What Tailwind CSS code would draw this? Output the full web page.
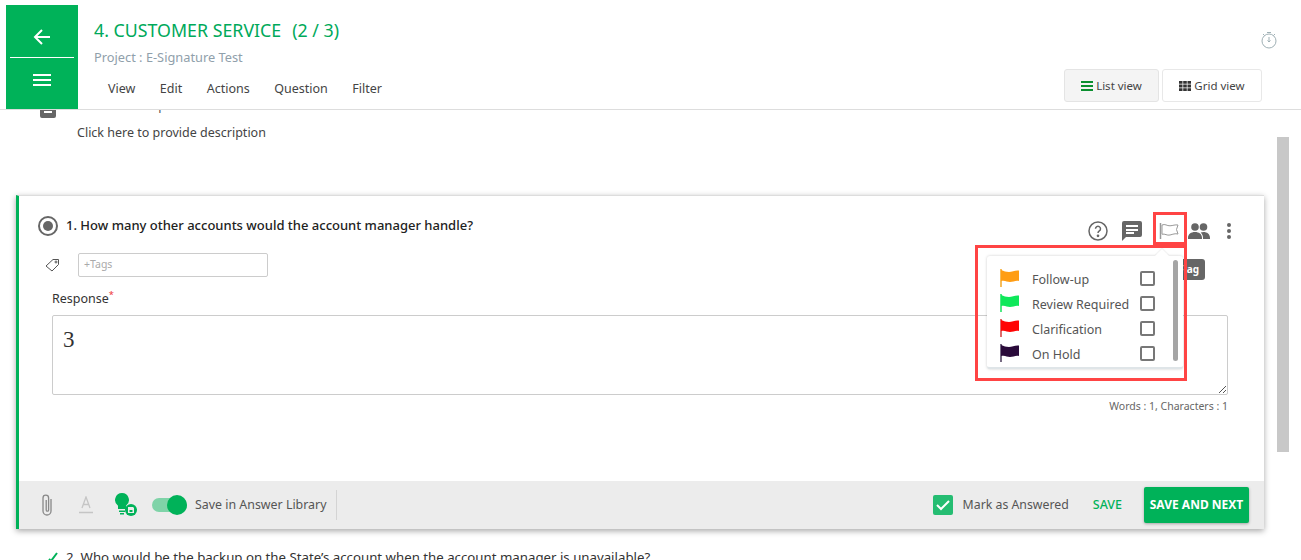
<!DOCTYPE html>
<html lang="en">
<head>
  <meta charset="UTF-8">
  <title>Customer Service</title>
  <script src="https://cdn.jsdelivr.net/npm/@tailwindcss/browser@4"></script>
</head>
<body class="h-[560px] overflow-hidden bg-white font-['Noto_Sans',sans-serif] text-[12.5px] text-[#444]">
  <!-- header -->
  <header class="relative z-20 flex h-[110px] border-b border-[#ddd] bg-white pl-[6px] pr-[39px]">
    <div class="mt-[5px] flex h-[104px] w-[72px] flex-col items-center bg-[#00b259] text-white">
      <svg class="mt-[22px] h-5 w-5" viewBox="0 0 20 20" fill="none" stroke="currentColor" stroke-width="2"><path d="M18 10H3M10 3l-7 7 7 7"/></svg>
      <div class="mt-[10px] h-px w-[64px] bg-white"></div>
      <svg class="mt-[15px] h-[14px] w-5" viewBox="0 0 20 14" fill="currentColor"><path d="M1 1h18v2H1zM1 6h18v2H1zM1 11h18v2H1z"/></svg>
    </div>
    <div class="ml-4 flex-1">
      <h1 class="mt-[18px] flex h-6 items-center text-[17.800px] leading-6 text-[#00a95a]"><span>4. CUSTOMER SERVICE</span><span class="ml-[11px]">(2 / 3)</span></h1>
      <p class="mt-[6px] text-[12.800px] leading-[18px] text-[#90a0ab]">Project : E-Signature Test</p>
      <nav class="mt-[14px] ml-[14px] flex gap-[24.500px] leading-[18px] text-[#444]">
        <span>View</span><span>Edit</span><span>Actions</span><span>Question</span><span>Filter</span>
      </nav>
    </div>
    <div class="flex flex-col items-end">
      <svg class="mt-[31px] mr-[-16px] h-[18px] w-[18px] text-[#9fb0b5]" viewBox="0 0 18 18" fill="none" stroke="currentColor" stroke-width="1"><circle cx="9" cy="10" r="7"/><path d="M9 6v5M7.500 9.500 9 11l1.500-1.500M7 1.500h4M3 3l1.500 1.500M15 3l-1.500 1.500"/></svg>
      <div class="mt-[20px] flex gap-[3px] text-[11.500px] leading-none">
        <button class="flex h-[33px] w-[95px] items-center justify-center gap-[3px] rounded-[3px] border border-[#e4e4e4] bg-[#f4f4f4]">
          <svg class="h-[10px] w-3 text-[#0a8f2f]" viewBox="0 0 12 10" fill="currentColor"><path d="M0 0h12v2H0zM0 4h12v2H0zM0 8h12v2H0z"/></svg>List view
        </button>
        <button class="flex h-[33px] w-[100px] items-center justify-center gap-[3px] rounded-[3px] border border-[#e8e8e8] bg-white">
          <svg class="h-[10px] w-3 text-[#333]" viewBox="0 0 12 10" fill="currentColor"><path d="M0 0h3.500v2.800H0zM4.200 0h3.600v2.800H4.200zM8.500 0H12v2.800H8.500zM0 3.600h3.500v2.800H0zM4.200 3.600h3.600v2.800H4.200zM8.500 3.600H12v2.800H8.500zM0 7.200h3.500V10H0zM4.200 7.200h3.600V10H4.200zM8.500 7.200H12V10H8.500z"/></svg>Grid view
        </button>
      </div>
    </div>
  </header>

  <!-- scrollbar -->
  <div class="absolute top-[137px] left-[1277px] h-[315px] w-3 bg-[#c8c8c8]"></div>

  <main class="relative">
    <!-- section description, clipped under the header -->
    <div class="relative z-10 mt-[-13px] flex h-[37px] pl-[40px]">
      <svg class="mt-[7px] h-[14px] w-4 shrink-0 text-[#666]" viewBox="0 0 16 14" fill="currentColor"><path d="M0 0h16v12a2 2 0 0 1-2 2H2a2 2 0 0 1-2-2zM4 7v2h8V7z"/></svg>
      <div class="ml-[21px]">
        <p class="h-[18px] leading-[18px] text-[#555]">Section description</p>
        <p class="mt-[9px] leading-[18px] text-[#444]">Click here to provide description</p>
      </div>
    </div>

    <!-- question card -->
    <section class="relative mt-[61px] ml-[16px] h-[334px] w-[1248px] border-t border-[#ddd] border-l-[3px] border-l-[#00b259] bg-white shadow-[0_2px_6px_rgba(0,0,0,0.35)]">
      <div class="flex h-[57px] pl-[19px]">
        <span class="mt-[20px] flex h-5 w-5 items-center justify-center rounded-full border-2 border-[#666]"><span class="h-[10px] w-[10px] rounded-full bg-[#666]"></span></span>
        <h2 class="mt-[19px] ml-2 text-[13px] leading-5 font-medium text-[#222]">1. How many other accounts would the account manager handle?</h2>
        <div class="mt-[19px] mr-[33px] ml-auto flex h-8 items-start text-[#666]">
          <svg class="mt-[6px] h-5 w-5" viewBox="0 0 20 20" fill="none" stroke="currentColor" stroke-width="1.500"><circle cx="10" cy="10" r="9"/><path d="M7.500 7.800a2.500 2.500 0 1 1 3.800 2.100c-.9.6-1.300 1-1.300 2.100"/><circle cx="10" cy="14.800" r=".6" fill="currentColor"/></svg>
          <svg class="mt-[6px] ml-[14px] h-5 w-5" viewBox="0 0 20 20" fill="currentColor"><path fill-rule="evenodd" d="M2 0h16a2 2 0 0 1 2 2v12a2 2 0 0 1-2 2H4l-4 4V2a2 2 0 0 1 2-2zm2 4v2h12V4zm0 4v2h12V8zm0 4v1h8v-2H4z"/></svg>
          <svg class="mt-[7px] ml-[17px] h-[18px] w-5 text-[#999]" viewBox="0 0 20 18" fill="none" stroke="currentColor"><path d="M1.500 1v16" stroke-width="1.500"/><path d="M3 3c3-1.500 5 1 8 .8s5-1.300 8-.8l-1.500 4.500L19 12c-3-.7-5 .2-8 1s-5-1.500-8-.8z" fill="#fff"/></svg>
          <svg class="mt-[8px] ml-[9px] h-4 w-[22px]" viewBox="0 0 22 16" fill="currentColor"><circle cx="7" cy="4" r="3.800"/><circle cx="15.500" cy="4" r="3.800"/><path d="M0 15c0-4 3-6 7-6s7 2 7 6v1H0zM15 16v-1c0-2.200-.8-4-2.300-5.400 1-.4 2-.6 2.800-.6 3.500 0 6.500 2 6.500 6v1z"/></svg>
          <svg class="mt-[6px] ml-[17px] h-5 w-[4px]" viewBox="0 0 4 20" fill="currentColor"><circle cx="2" cy="4" r="2"/><circle cx="2" cy="10" r="2"/><circle cx="2" cy="16" r="2"/></svg>
        </div>
      </div>
      <div class="flex items-center pl-[26px]">
        <svg class="h-[14px] w-[15px] text-[#555]" viewBox="0 0 15 14" fill="none" stroke="currentColor"><path d="M1 8 8 1.500h5.500V6.500L7 13z"/><circle cx="11" cy="4" r="1"/></svg>
        <div class="ml-[18px] flex h-6 w-[190px] items-center rounded-[2px] border border-[#ccc] px-[5px] text-[10.500px] text-[#aaa]">+Tags</div>
      </div>
      <p class="mt-[13px] ml-[33px] leading-[18px] text-[#333]">Response<sup class="text-[#e33]">*</sup></p>
      <div class="relative mt-[7px] ml-[33px] h-[80px] w-[1176px] rounded-[2px] border border-[#ccc] px-[10px] py-[12px] font-['Liberation_Serif',serif] text-[23px] leading-6 text-[#333]">3
        <svg class="absolute right-0 bottom-0 h-[10px] w-[10px] text-[#555]" viewBox="0 0 10 10" stroke="currentColor"><path d="M9 2 2 9M9 6 6 9"/></svg>
      </div>
      <p class="mt-[4px] mr-[36px] text-right text-[10.500px] leading-[14px] text-[#666]">Words : 1, Characters : 1</p>

      <!-- footer -->
      <div class="absolute inset-x-0 bottom-0 flex h-[48px] items-center bg-[#ececec] pl-[20px]">
        <svg class="h-6 w-[16px] text-[#888]" viewBox="0 0 16 24" fill="none" stroke="currentColor" stroke-width="1.300"><path d="M12 6v12a4 4 0 0 1-8 0V5a2.800 2.800 0 0 1 5.600 0v12a1.200 1.200 0 0 1-2.400 0V7"/></svg>
        <svg class="ml-[24px] h-[18px] w-[14px] text-[#c5c5c5]" viewBox="0 0 14 18" fill="none" stroke="currentColor" stroke-width="1.300"><path d="M3 12 7 1l4 11M4.500 8.500h5"/><path d="M0 16.500h14" stroke-width="1.500"/></svg>
        <svg class="ml-[21px] h-[24px] w-[24px]" viewBox="0 0 24 24"><path fill="#00b259" d="M8 0a7 7 0 0 1 4 12.700V16H4v-3.300A7 7 0 0 1 8 0zM5 17.500h6V19H5zM6 20h4v1.500H6z"/><circle cx="17" cy="17" r="6" fill="#00b259"/><path fill="#ececec" d="M14 14h5l1 1v5h-6zm1.500 3v2h3v-2z"/></svg>
        <span class="relative ml-[14px] h-[14px] w-[35px] rounded-full bg-[#7fd3a8]"><span class="absolute top-[-3px] right-0 h-5 w-5 rounded-full bg-[#00b259]"></span></span>
        <span class="ml-2 text-[12.400px] text-[#555]">Save in Answer Library</span>
        <span class="ml-[10px] h-[30px] w-px bg-[#d4d4d4]"></span>
        <span class="ml-auto flex h-5 w-5 items-center justify-center rounded-[2px] bg-[#25bd72]">
          <svg class="h-3 w-[14px] text-white" viewBox="0 0 14 12" fill="none" stroke="currentColor" stroke-width="2"><path d="m1 6 4 4 8-8"/></svg>
        </span>
        <span class="ml-[10px] text-[12.300px] text-[#555]">Mark as Answered</span>
        <span class="ml-6 text-[12.500px] font-medium text-[#00b259]">SAVE</span>
        <button class="mr-[15px] ml-[22px] h-9 w-[105px] rounded-[2px] bg-[#00b259] text-xs font-bold text-white shadow-[0_1px_3px_rgba(0,0,0,0.3)]">SAVE AND NEXT</button>
      </div>

      <!-- flag popover -->
      <div class="absolute top-[60px] left-[968px] z-10 h-[113px] w-[196px] rounded-[3px] border-b-2 border-b-[#dfe5e8] bg-white shadow-[0_0_3px_rgba(0,0,0,0.2)]">
        <span class="absolute top-[-5px] left-[170px] h-[10px] w-[10px] rotate-45 bg-white shadow-[-1px_-1px_1px_rgba(0,0,0,0.06)]"></span>
        <div class="grid grid-cols-[32px_108px_auto] items-center pt-[11px] pl-[13px] leading-[25px] text-[#555]">
          <svg class="mb-[4px] h-[18px] w-5" viewBox="0 0 20 18"><path stroke="#f5a623" stroke-width="1.500" d="M1 0v18"/><path fill="#ff9d14" d="M1 1c3 1 5 2 8 2s6-2 10-1.500v10.500c-3-1-6 1-9 1s-5-2-9-1z"/></svg>
          <span>Follow-up</span>
          <span class="mb-[2px] h-[15px] w-[15px] rounded-[2px] border-2 border-[#777]"></span>
          <svg class="mb-[4px] h-[18px] w-5" viewBox="0 0 20 18"><path stroke="#14e35a" stroke-width="1.500" d="M1 0v18"/><path fill="#0ee85a" d="M1 1c3 1 5 2 8 2s6-2 10-1.500v10.500c-3-1-6 1-9 1s-5-2-9-1z"/></svg>
          <span>Review Required</span>
          <span class="mb-[2px] h-[15px] w-[15px] rounded-[2px] border-2 border-[#777]"></span>
          <svg class="mb-[4px] h-[18px] w-5" viewBox="0 0 20 18"><path stroke="#d43a3a" stroke-width="1.500" d="M1 0v18"/><path fill="#ff0505" d="M1 1c3 1 5 2 8 2s6-2 10-1.500v10.500c-3-1-6 1-9 1s-5-2-9-1z"/></svg>
          <span>Clarification</span>
          <span class="mb-[2px] h-[15px] w-[15px] rounded-[2px] border-2 border-[#777]"></span>
          <svg class="mb-[4px] h-[18px] w-5" viewBox="0 0 20 18"><path stroke="#4a3a5a" stroke-width="1.500" d="M1 0v18"/><path fill="#2a0a3a" d="M1 1c3 1 5 2 8 2s6-2 10-1.500v10.500c-3-1-6 1-9 1s-5-2-9-1z"/></svg>
          <span>On Hold</span>
          <span class="mb-[2px] h-[15px] w-[15px] rounded-[2px] border-2 border-[#777]"></span>
        </div>
        <span class="absolute top-[4px] right-[5px] h-[101px] w-[5px] rounded-full bg-[#a5a5a5]"></span>
      </div>
      <!-- tag behind the popover -->
      <span class="absolute top-[63px] left-[1139px] h-[21px] w-[47px] rounded-[3px] bg-[#666] pr-[6px] text-right text-[10px] leading-[21px] font-bold text-white">Flag</span>
      <!-- red highlights -->
      <div class="absolute top-[16px] left-[1134px] z-20 h-[33px] w-[34px] border-[3px] border-[#f44]"></div>
      <div class="absolute top-[49px] left-[956px] z-20 h-[136px] w-[212px] border-[3px] border-[#f44]"></div>
    </section>

    <div class="mt-[18px] flex pl-[48px] text-[13.250px] leading-5 text-[#333]">
      <svg class="mt-[4px] h-3 w-[10px] text-[#00b259]" viewBox="0 0 10 12" fill="none" stroke="currentColor" stroke-width="2"><path d="m1 8 2 2 6-8"/></svg>
      <span class="ml-[8px]">2. Who would be the backup on the State’s account when the account manager is unavailable?</span>
    </div>
  </main>
</body>
</html>
